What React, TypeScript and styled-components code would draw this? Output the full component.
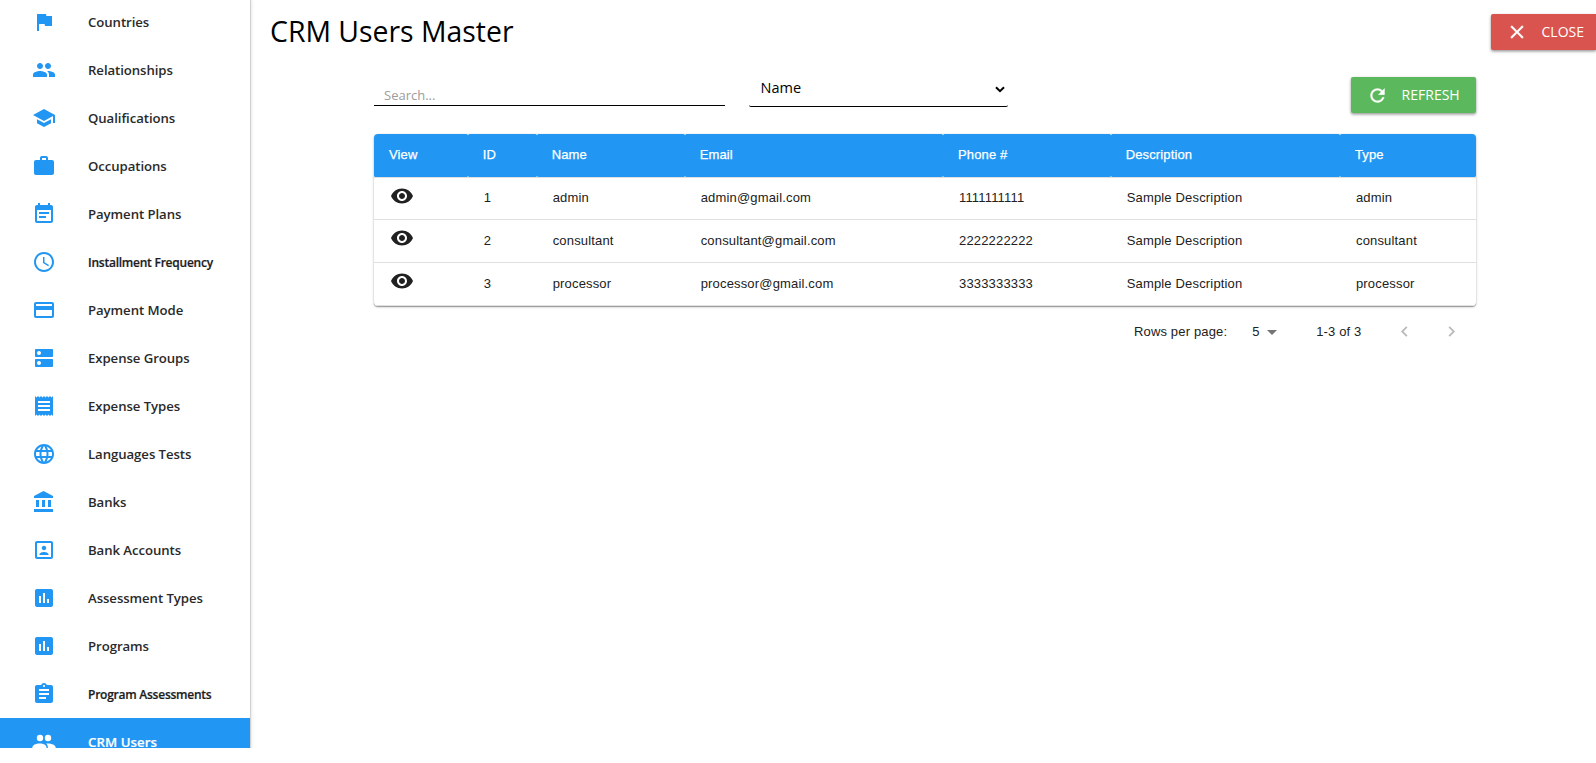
import React from 'react';
import styled, { createGlobalStyle, css } from 'styled-components';
import type { IconType } from 'react-icons';
import {
  MdArrowDropDown,
  MdAssessment,
  MdAssignment,
  MdChevronLeft,
  MdChevronRight,
  MdClear,
  MdDns,
  MdEventNote,
  MdFlag,
  MdLanguage,
  MdPayment,
  MdPeople,
  MdPortrait,
  MdReceipt,
  MdRefresh,
  MdSchedule,
  MdSchool,
  MdVisibility,
  MdWork,
} from 'react-icons/md';

const uiFont = '"Open Sans", "Noto Sans", sans-serif';
const tableFont = '"Liberation Sans", Arial, sans-serif';
const blue = '#2196f3';

const GlobalStyle = createGlobalStyle`
  *, *::before, *::after { box-sizing: border-box; }
  html, body { margin: 0; padding: 0; background: #fff; overflow: hidden; }
  body { font-family: ${uiFont}; color: #000; }
`;

const Page = styled.div`
  display: flex;
  width: 100%;
  height: 748px;
  overflow: hidden;
`;

const SidebarClip = styled.div`
  flex: none;
  width: 258px;
  height: 748px;
  overflow: hidden;
`;

const Sidebar = styled.nav`
  width: 250px;
  height: 770px;
  margin-top: -2px;
  background: #fff;
  box-shadow: 0 0 5px rgba(0, 0, 0, 0.16), 1px 0 1px rgba(0, 0, 0, 0.12);
`;

const NavItem = styled.a<{ $active?: boolean; $small?: boolean }>`
  display: flex;
  align-items: center;
  gap: 32px;
  height: 48px;
  padding-left: 32px;
  font-size: 13.2px;
  font-weight: 600;
  line-height: 20px;
  letter-spacing: -0.07px;
  white-space: nowrap;
  color: #2a2a2a;
  svg { flex: none; width: 24px; height: 24px; color: ${blue}; }
  ${(p) => p.$small && css`
    font-size: 12px;
    letter-spacing: -0.24px;
    color: #1c1c1c;
    -webkit-text-stroke: 0.2px #1c1c1c;
    span { padding-top: 2px; }
  `}
  ${(p) => p.$active && css`
    background: ${blue};
    color: #fff;
    letter-spacing: 0.08px;
    -webkit-text-stroke: 0.2px #fff;
    svg { color: #fff; }
  `}
`;

const Main = styled.main`
  flex: 1;
  min-width: 0;
`;

const TopBar = styled.header`
  display: flex;
  justify-content: space-between;
  padding: 14px 0 0 12px;
  height: 77px;
`;

const Title = styled.h1`
  margin: 0;
  font-size: 28.4px;
  font-weight: 400;
  line-height: 34px;
`;

const Button = styled.button<{ $tone: string; $width: number; $flush?: boolean }>`
  display: flex;
  align-items: center;
  flex: none;
  width: ${(p) => p.$width}px;
  height: 36px;
  padding: 0 0 0 ${(p) => (p.$flush ? 15 : 16)}px;
  border: 0;
  border-radius: ${(p) => (p.$flush ? '2px 0 0 2px' : '2px')};
  background: ${(p) => p.$tone};
  box-shadow: 0 1px 3px rgba(0, 0, 0, 0.3), 0 2px 3px rgba(0, 0, 0, 0.16);
  color: #fff;
  font: 400 14px/20px ${uiFont};
  svg {
    flex: none;
    width: ${(p) => (p.$flush ? 22 : 21)}px;
    height: ${(p) => (p.$flush ? 22 : 21)}px;
    margin-right: ${(p) => (p.$flush ? 13.5 : 13.6)}px;
  }
  svg path:not([fill='none']) {
    stroke: currentColor;
    stroke-width: 0.4px;
  }
`;

const Content = styled.section`
  width: 1102px;
  margin-left: 116px;
`;

const Filters = styled.div`
  display: flex;
  height: 57px;
`;

const SearchInput = styled.input`
  width: 351px;
  height: 29px;
  margin-right: 24px;
  padding: 7px 10px 0;
  border: 0;
  border-bottom: 1px solid #000;
  outline: 0;
  background: transparent;
  font: 400 13px/20px ${uiFont};
  &::placeholder { color: #9c9c9c; opacity: 1; }
`;

const Select = styled.div`
  display: flex;
  align-items: center;
  justify-content: space-between;
  width: 259px;
  height: 30px;
  padding: 0 3px 7px 11.5px;
  border-bottom: 1px solid #000;
  border-radius: 2px;
  font-size: 14.5px;
  line-height: 20px;
  svg { width: 10px; height: 7px; margin-top: 2px; }
`;

const ButtonSlot = styled.div`
  margin-left: auto;
`;

const Table = styled.table`
  width: 1102px;
  table-layout: fixed;
  border-collapse: separate;
  border-spacing: 0;
  border-radius: 4px;
  overflow: hidden;
  box-shadow: 0 1px 1px rgba(0, 0, 0, 0.3), 0 1px 3px rgba(0, 0, 0, 0.2), 0 0 1px rgba(0, 0, 0, 0.1);
  font: 400 13px/18px ${tableFont};
  letter-spacing: 0.17px;
`;

const Col = styled.col<{ $w: number }>`
  width: ${(p) => p.$w}px;
`;

const HeadCell = styled.th`
  height: 43px;
  padding: 0 0 2px 15px;
  border-radius: 1.5px;
  background: ${blue};
  color: #fff;
  font-weight: 400;
  text-align: left;
  letter-spacing: 0.14px;
  -webkit-text-stroke: 0.25px #fff;
`;

const Row = styled.tr<{ $h: number }>`
  height: ${(p) => p.$h}px;
  td { border-top: 1px solid #e0e0e0; }
  &:last-child td { border-bottom: 1px solid #e0e0e0; }
`;

const Cell = styled.td`
  padding: 0 0 1px 16px;
  color: #212121;
`;

const ViewCell = styled(Cell)`
  padding-bottom: 6px;
  svg { display: block; width: 24px; height: 24px; }
`;

const Pagination = styled.footer`
  display: flex;
  align-items: center;
  justify-content: flex-end;
  height: 51px;
  padding-right: 14.5px;
  font: 400 13px/18px ${tableFont};
  letter-spacing: 0.16px;
  color: #212121;
`;

const PageSize = styled.div`
  display: flex;
  align-items: center;
  margin: 0 32px 0 25px;
  svg { width: 24px; height: 24px; margin-left: 0.5px; color: #757575; }
`;

const Arrows = styled.div`
  display: flex;
  gap: 26px;
  margin-left: 32px;
  color: #b8b8b8;
  svg { display: block; width: 21px; height: 21px; }
`;

function UsersIcon() {
  return (
    <svg viewBox="0 0 24 24" fill="currentColor">
      <circle cx="8" cy="8" r="3.2" />
      <circle cx="16" cy="8" r="3.2" />
      <path d="M.3 19v-1.4C.3 15.100 3.700 13.500 7.700 13.500s6.800 1.600 6.800 4.100V19z" />
      <path d="M14 13.500c5.500-.3 9.700 1.300 9.700 4.100V19h-7.800v-1.400c0-1.700-.7-3.100-1.900-4.100z" />
    </svg>
  );
}

function BankIcon() {
  return (
    <svg viewBox="0 0 24 24" fill="currentColor">
      <path d="M4 10v7h3v-7H4zm6 0v7h3v-7h-3zM2 22h19v-3H2v3zm14-12v7h3v-7h-3zm-4.500-9L2 6v2h19V6l-9.500-5z" />
    </svg>
  );
}

type NavEntry = { label: string; icon: IconType | (() => React.JSX.Element); small?: boolean; active?: boolean };

const navEntries: NavEntry[] = [
  { label: 'Countries', icon: MdFlag },
  { label: 'Relationships', icon: MdPeople },
  { label: 'Qualifications', icon: MdSchool },
  { label: 'Occupations', icon: MdWork },
  { label: 'Payment Plans', icon: MdEventNote },
  { label: 'Installment Frequency', icon: MdSchedule, small: true },
  { label: 'Payment Mode', icon: MdPayment },
  { label: 'Expense Groups', icon: MdDns },
  { label: 'Expense Types', icon: MdReceipt },
  { label: 'Languages Tests', icon: MdLanguage },
  { label: 'Banks', icon: BankIcon },
  { label: 'Bank Accounts', icon: MdPortrait },
  { label: 'Assessment Types', icon: MdAssessment },
  { label: 'Programs', icon: MdAssessment },
  { label: 'Program Assessments', icon: MdAssignment, small: true },
  { label: 'CRM Users', icon: UsersIcon, active: true },
];

const columns = [
  { title: 'View', width: 93.67 },
  { title: 'ID', width: 69 },
  { title: 'Name', width: 148 },
  { title: 'Email', width: 258.33 },
  { title: 'Phone #', width: 167.67 },
  { title: 'Description', width: 229.33 },
  { title: 'Type', width: 136 },
];

const users = [
  { id: 1, name: 'admin', email: 'admin@gmail.com', phone: '1111111111', height: 42 },
  { id: 2, name: 'consultant', email: 'consultant@gmail.com', phone: '2222222222', height: 43 },
  { id: 3, name: 'processor', email: 'processor@gmail.com', phone: '3333333333', height: 44 },
];

export default function App() {
  return (
    <>
      <GlobalStyle />
      <Page>
        <SidebarClip>
          <Sidebar>
            {navEntries.map(({ label, icon: Icon, small, active }) => (
              <NavItem key={label} $small={small} $active={active}>
                <Icon />
                <span>{label}</span>
              </NavItem>
            ))}
          </Sidebar>
        </SidebarClip>
        <Main>
          <TopBar>
            <Title>CRM Users Master</Title>
            <Button $tone="#d9534f" $width={105} $flush>
              <MdClear />
              CLOSE
            </Button>
          </TopBar>
          <Content>
            <Filters>
              <SearchInput placeholder="Search..." />
              <Select>
                Name
                <svg viewBox="0 0 10 7" fill="none" stroke="#000" strokeWidth="2">
                  <path d="M1 1.200l4 4 4-4" />
                </svg>
              </Select>
              <ButtonSlot>
                <Button $tone="#5cb85c" $width={125}>
                  <MdRefresh />
                  REFRESH
                </Button>
              </ButtonSlot>
            </Filters>
            <Table>
              <colgroup>
                {columns.map((c) => (
                  <Col key={c.title} $w={c.width} />
                ))}
              </colgroup>
              <thead>
                <tr>
                  {columns.map((c) => (
                    <HeadCell key={c.title}>{c.title}</HeadCell>
                  ))}
                </tr>
              </thead>
              <tbody>
                {users.map((u) => (
                  <Row key={u.id} $h={u.height}>
                    <ViewCell>
                      <MdVisibility />
                    </ViewCell>
                    <Cell>{u.id}</Cell>
                    <Cell>{u.name}</Cell>
                    <Cell>{u.email}</Cell>
                    <Cell>{u.phone}</Cell>
                    <Cell>Sample Description</Cell>
                    <Cell>{u.name}</Cell>
                  </Row>
                ))}
              </tbody>
            </Table>
            <Pagination>
              <span>Rows per page:</span>
              <PageSize>
                5
                <MdArrowDropDown />
              </PageSize>
              <span>1-3 of 3</span>
              <Arrows>
                <MdChevronLeft />
                <MdChevronRight />
              </Arrows>
            </Pagination>
          </Content>
        </Main>
      </Page>
    </>
  );
}
